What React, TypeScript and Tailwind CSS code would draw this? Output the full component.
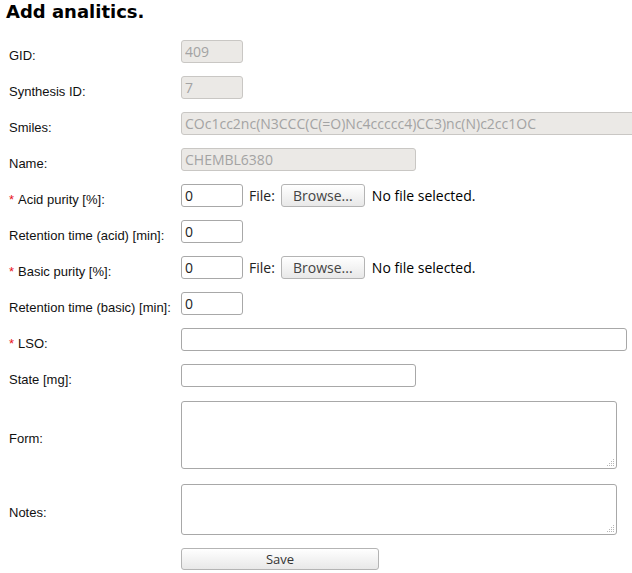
import React from "react";

const label = "text-[13px] text-[#111] font-['Liberation_Sans',Arial,sans-serif] translate-y-[4px]";
const field =
  "block h-[23px] rounded-[3px] border border-[#a8a8a8] bg-white px-[3px] text-[14px] text-[#222] font-['Open_Sans',sans-serif] outline-none";
const disabledField =
  "block h-[23px] rounded-[3px] border border-[#c9c7c4] bg-[#ebe9e6] px-[3px] text-[14px] text-[#a3a3a3] font-['Open_Sans',sans-serif]";

const Req = () => <span className="text-[#e8141b] mr-[4px]">*</span>;

const FileInput = () => (
  <div className="flex items-center ml-[6px] font-['Open_Sans',sans-serif] text-[14px]">
    <span className="text-[#222]">File:</span>
    <button className="ml-[6px] h-[23px] w-[84px] rounded-[3px] border border-[#b4b4b4] bg-gradient-to-b from-white to-[#e8e8e8] text-[#444] text-[14px] leading-none">
      Browse...
    </button>
    <span className="ml-[7px] text-[14px] text-black">No file selected.</span>
  </div>
);

// dotted grip drawn in the textarea corner, like the reference's resize handle
const Grip = () => (
  <svg className="absolute right-[2px] bottom-[2px]" width="8" height="8" viewBox="0 0 8 8">
    {[
      [6, 0],
      [6, 2],
      [4, 2],
      [6, 4],
      [4, 4],
      [2, 4],
      [6, 6],
      [4, 6],
      [2, 6],
      [0, 6],
    ].map(([x, y], i) => (
      <rect key={i} x={x} y={y} width="1" height="1" fill="#b8b8b8" />
    ))}
  </svg>
);

const Area = ({ h }: { h: string }) => (
  <div className={`relative w-[436px] ${h}`}>
    <textarea className="block h-full w-full resize-none rounded-[3px] border border-[#a8a8a8] bg-white outline-none" />
    <Grip />
  </div>
);

export default function App() {
  return (
    <div className="w-[632px] h-[573px] overflow-hidden bg-white">
      <h1 className="pl-[6px] pt-[1px] text-[18px] leading-[22px] font-bold text-black font-['DejaVu_Sans',sans-serif]">
        Add analitics.
      </h1>
      <form className="mt-[17px] pl-[9px] grid grid-cols-[172px_1fr] gap-y-[13px] items-center">
        <span className={label}>GID:</span>
        <input disabled value="409" readOnly className={`${disabledField} w-[62px]`} />

        <span className={label}>Synthesis ID:</span>
        <input disabled value="7" readOnly className={`${disabledField} w-[62px]`} />

        <span className={label}>Smiles:</span>
        <input
          disabled
          value="COc1cc2nc(N3CCC(C(=O)Nc4ccccc4)CC3)nc(N)c2cc1OC"
          readOnly
          className={`${disabledField} w-[460px]`}
        />

        <span className={label}>Name:</span>
        <input disabled value="CHEMBL6380" readOnly className={`${disabledField} w-[235px]`} />

        <span className={label}>
          <Req />
          Acid purity [%]:
        </span>
        <div className="flex items-center">
          <input defaultValue="0" className={`${field} w-[62px]`} />
          <FileInput />
        </div>

        <span className={label}>Retention time (acid) [min]:</span>
        <input defaultValue="0" className={`${field} w-[62px]`} />

        <span className={label}>
          <Req />
          Basic purity [%]:
        </span>
        <div className="flex items-center">
          <input defaultValue="0" className={`${field} w-[62px]`} />
          <FileInput />
        </div>

        <span className={label}>Retention time (basic) [min]:</span>
        <input defaultValue="0" className={`${field} w-[62px]`} />

        <span className={label}>
          <Req />
          LSO:
        </span>
        <input className={`${field} w-[446px]`} />

        <span className={label}>State [mg]:</span>
        <input className={`${field} w-[235px]`} />

        <span className={label}>Form:</span>
        <div className="mt-[1px]">
          <Area h="h-[68px]" />
        </div>

        <span className={label}>Notes:</span>
        <div className="mt-[2px]">
          <Area h="h-[51px]" />
        </div>

        <span />
        <button
          type="button"
          className="block h-[22px] w-[198px] rounded-[3px] border border-[#b4b4b4] bg-gradient-to-b from-white to-[#e8e8e8] text-[13px] leading-none text-[#333] font-['Open_Sans',sans-serif]"
        >
          Save
        </button>
      </form>
    </div>
  );
}
